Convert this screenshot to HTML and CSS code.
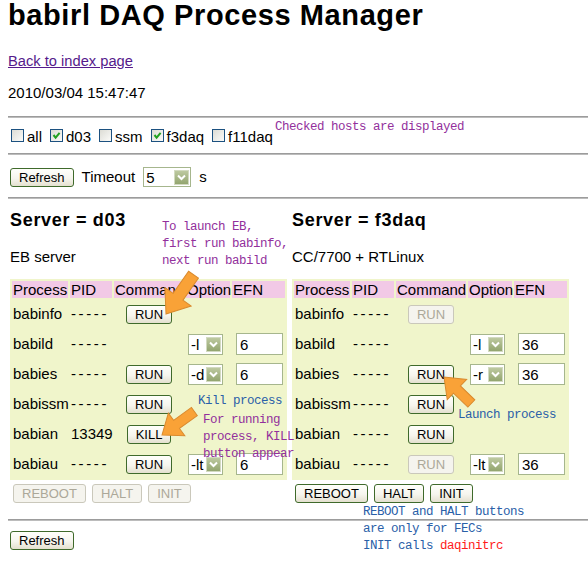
FILE: index.html
```html
<!DOCTYPE html>
<html>
<head>
<meta charset="utf-8">
<title>babirl DAQ Process Manager</title>
<link rel="stylesheet" href="styles.css">
</head>
<body>
<h1 class="title">babirl DAQ Process Manager</h1>
<p class="back"><a href="#">Back to index page</a></p>
<p class="date">2010/03/04 15:47:47</p>
<hr class="rule rule-a">
<div class="hosts">
  <label class="host"><span class="cb"></span>all</label>
  <label class="host"><span class="cb"><svg viewBox="0 0 11 11" width="11" height="11"><path d="M2.5 5 L4.6 7.6 L8.6 2.8" fill="none" stroke="#21a121" stroke-width="2"/></svg></span>d03</label>
  <label class="host"><span class="cb"></span>ssm</label>
  <label class="host"><span class="cb"><svg viewBox="0 0 11 11" width="11" height="11"><path d="M2.5 5 L4.6 7.6 L8.6 2.8" fill="none" stroke="#21a121" stroke-width="2"/></svg></span>f3daq</label>
  <label class="host"><span class="cb"></span>f11daq</label>
</div>
<hr class="rule rule-b">
<div class="controls">
  <button class="btn">Refresh</button>
  <span>Timeout</span>
  <span class="sel sel-wide"><select><option>5</option></select><span class="sel-arrow"><svg width="9" height="7" viewBox="0 0 9 7"><path d="M1 1.5 L4.5 5 L8 1.5" fill="none" stroke="#fff" stroke-width="2"/></svg></span></span>
  <span>s</span>
</div>
<hr class="rule rule-c">
<div class="servers">
  <section class="server">
    <h2 class="server-name">Server = d03</h2>
    <p class="desc">EB server</p>
    <table class="procs">
      <colgroup><col class="c-proc"><col class="c-pid"><col class="c-cmd"><col class="c-opt"><col class="c-efn"></colgroup>
      <tr><th>Process</th><th>PID</th><th>Command</th><th>Option</th><th>EFN</th></tr>
      <tr><td>babinfo</td><td class="none">-----</td><td class="cmd"><button class="btn">RUN</button></td><td></td><td></td></tr>
      <tr><td>babild</td><td class="none">-----</td><td class="cmd"></td><td><span class="sel"><select><option>-l</option></select><span class="sel-arrow"><svg width="9" height="7" viewBox="0 0 9 7"><path d="M1 1.5 L4.5 5 L8 1.5" fill="none" stroke="#fff" stroke-width="2"/></svg></span></span></td><td><input class="efn" value="6"></td></tr>
      <tr><td>babies</td><td class="none">-----</td><td class="cmd"><button class="btn">RUN</button></td><td><span class="sel"><select><option>-d</option></select><span class="sel-arrow"><svg width="9" height="7" viewBox="0 0 9 7"><path d="M1 1.5 L4.5 5 L8 1.5" fill="none" stroke="#fff" stroke-width="2"/></svg></span></span></td><td><input class="efn" value="6"></td></tr>
      <tr><td>babissm</td><td class="none">-----</td><td class="cmd"><button class="btn">RUN</button></td><td></td><td></td></tr>
      <tr><td>babian</td><td>13349</td><td class="cmd"><button class="btn">KILL</button></td><td></td><td></td></tr>
      <tr><td>babiau</td><td class="none">-----</td><td class="cmd"><button class="btn">RUN</button></td><td><span class="sel"><select><option>-lt</option></select><span class="sel-arrow"><svg width="9" height="7" viewBox="0 0 9 7"><path d="M1 1.5 L4.5 5 L8 1.5" fill="none" stroke="#fff" stroke-width="2"/></svg></span></span></td><td><input class="efn" value="6"></td></tr>
    </table>
    <div class="actions">
      <button class="btn" disabled>REBOOT</button>
      <button class="btn" disabled>HALT</button>
      <button class="btn" disabled>INIT</button>
    </div>
  </section>
  <section class="server">
    <h2 class="server-name">Server = f3daq</h2>
    <p class="desc">CC/7700 + RTLinux</p>
    <table class="procs">
      <colgroup><col class="c-proc"><col class="c-pid"><col class="c-cmd"><col class="c-opt"><col class="c-efn"></colgroup>
      <tr><th>Process</th><th>PID</th><th>Command</th><th>Option</th><th>EFN</th></tr>
      <tr><td>babinfo</td><td class="none">-----</td><td class="cmd"><button class="btn" disabled>RUN</button></td><td></td><td></td></tr>
      <tr><td>babild</td><td class="none">-----</td><td class="cmd"></td><td><span class="sel"><select><option>-l</option></select><span class="sel-arrow"><svg width="9" height="7" viewBox="0 0 9 7"><path d="M1 1.5 L4.5 5 L8 1.5" fill="none" stroke="#fff" stroke-width="2"/></svg></span></span></td><td><input class="efn" value="36"></td></tr>
      <tr><td>babies</td><td class="none">-----</td><td class="cmd"><button class="btn">RUN</button></td><td><span class="sel"><select><option>-r</option></select><span class="sel-arrow"><svg width="9" height="7" viewBox="0 0 9 7"><path d="M1 1.5 L4.5 5 L8 1.5" fill="none" stroke="#fff" stroke-width="2"/></svg></span></span></td><td><input class="efn" value="36"></td></tr>
      <tr><td>babissm</td><td class="none">-----</td><td class="cmd"><button class="btn">RUN</button></td><td></td><td></td></tr>
      <tr><td>babian</td><td class="none">-----</td><td class="cmd"><button class="btn">RUN</button></td><td></td><td></td></tr>
      <tr><td>babiau</td><td class="none">-----</td><td class="cmd"><button class="btn" disabled>RUN</button></td><td><span class="sel"><select><option>-lt</option></select><span class="sel-arrow"><svg width="9" height="7" viewBox="0 0 9 7"><path d="M1 1.5 L4.5 5 L8 1.5" fill="none" stroke="#fff" stroke-width="2"/></svg></span></span></td><td><input class="efn" value="36"></td></tr>
    </table>
    <div class="actions">
      <button class="btn">REBOOT</button>
      <button class="btn">HALT</button>
      <button class="btn">INIT</button>
    </div>
  </section>
</div>
<hr class="rule rule-d">
<button class="btn btn-bottom">Refresh</button>

<p class="note purple note-hosts">Checked hosts are displayed</p>
<p class="note purple note-launch">To launch EB,
first run babinfo,
next run babild</p>
<p class="note blue note-kill">Kill process</p>
<p class="note purple note-running">For running
process, KILL
button appear</p>
<p class="note blue note-proc">Launch process</p>
<div class="note blue note-reboot"><div>REBOOT and HALT buttons</div><div>are only for FECs</div><div>INIT calls <span class="red">daqinitrc</span></div></div>

<svg class="arrows" width="588" height="574" viewBox="0 0 588 574">
  <polygon transform="translate(166 314) rotate(125)" points="0,0 -21,-16 -21,-6 -48,-6 -48,6 -21,6 -21,16"/>
  <polygon transform="translate(162 435) rotate(144)" points="0,0 -18,-14 -18,-5 -40,-5 -40,5 -18,5 -18,14"/>
  <polygon transform="translate(444 377) rotate(224)" points="0,0 -18,-14 -18,-5 -38,-5 -38,5 -18,5 -18,14"/>
</svg>
</body>
</html>
```
FILE: styles.css
```css
* { box-sizing: border-box; }
html { background: #fff; }
body {
  margin: 0 0 0 8px;
  font-family: "Liberation Sans", Arial, sans-serif;
  font-size: 15px;
  line-height: 18px;
  color: #000;
  overflow: hidden;
}
.title {
  margin: 0;
  font-size: 29px;
  line-height: 30px;
  font-weight: bold;
  letter-spacing: 0.6px;
}
.back { margin: 22px 0 0; font-size: 14.7px; }
.back a { color: #551a8b; }
.date { margin: 14px 0 0; }
.rule {
  height: 0;
  margin: 0;
  border: 0;
  border-top: 1px solid #9c9c9c;
  border-bottom: 1px solid #bcbcbc;
}
.rule-a { margin-top: 14px; }
.rule-b { margin-top: 7px; }
.rule-c { margin-top: 10px; }
.rule-d { margin-top: 16px; }

.hosts { margin-top: 10px; display: flex; align-items: baseline; }
.host { display: block; margin-right: 5px; }
.cb {
  display: inline-block;
  vertical-align: baseline;
  width: 13px;
  height: 13px;
  margin: 0 3px;
  border: 1px solid #1c5180;
  background: linear-gradient(135deg, #dcdcd5, #fbfbf9);
}
.cb svg { display: block; }

.controls {
  margin-top: 12px;
  height: 20px;
  display: flex;
  align-items: center;
  gap: 8px;
  padding-left: 2px;
}

.btn {
  font-family: "Liberation Sans", Arial, sans-serif;
  font-size: 13px;
  height: 19px;
  line-height: 17px;
  padding: 0 8px;
  margin: 0;
  border: 1px solid #3f6a2b;
  border-radius: 3px;
  background: linear-gradient(#fffffb, #f6f5ee 55%, #e4e0cf);
  color: #000;
}
.btn:disabled {
  border-color: #cac8bb;
  color: #aca899;
  background: #f5f4ee;
}
.btn-bottom { display: block; margin: 10px 0 0 2px; }

.sel {
  display: inline-flex;
  align-items: center;
  vertical-align: middle;
  width: 35px;
  height: 21px;
  margin-left: 1px;
  padding: 1px;
  border: 1px solid #a6b68d;
  background: #fff;
}
.sel-wide { width: 48px; height: 20px; margin-left: 0; }
.sel select {
  -webkit-appearance: none;
  appearance: none;
  flex: 1;
  min-width: 0;
  height: 100%;
  margin: 0;
  padding: 0 0 0 1px;
  border: 0;
  background: transparent;
  font: inherit;
  font-size: 15px;
  color: #000;
  outline: none;
}
.sel-arrow {
  flex: none;
  width: 15px;
  height: 15px;
  display: flex;
  align-items: center;
  justify-content: center;
  border: 1px solid #d2dac0;
  background: linear-gradient(#bdc9a0, #93a56f);
}
.sel-arrow svg { display: block; }

.efn {
  width: 47px;
  height: 22px;
  margin: 0 0 0 3px;
  padding: 0 3px;
  border: 1px solid #a6b68d;
  font: inherit;
  font-size: 15px;
  color: #000;
  vertical-align: middle;
}

.servers {
  display: grid;
  grid-template-columns: 277px 277px;
  column-gap: 5px;
  padding-left: 2px;
}
.server-name {
  margin: 10px 0 0;
  font-size: 18px;
  line-height: 22px;
  letter-spacing: 0.7px;
}
.desc { margin: 17px 0 0; }

.procs {
  margin-top: 13px;
  width: 277px;
  table-layout: fixed;
  border-collapse: separate;
  border-spacing: 2px;
  background: #f0f5cb;
}
.c-proc { width: 56px; }
.c-pid { width: 42px; }
.c-cmd { width: 70px; }
.c-opt { width: 44px; }
.c-efn { width: 53px; }
.procs th {
  height: 17px;
  padding: 0 1px;
  line-height: 17px;
  background: #f2c9e6;
  font-weight: normal;
  text-align: left;
  white-space: nowrap;
}
.procs td {
  height: 28px;
  padding: 0 1px;
  white-space: nowrap;
  vertical-align: middle;
}
.procs td.none { letter-spacing: 2.6px; }
.procs td.cmd { text-align: center; }

.actions {
  margin-top: 4px;
  display: flex;
  gap: 6px;
  padding-left: 3px;
}

.note {
  position: absolute;
  margin: 0;
  font-family: "Liberation Mono", "DejaVu Sans Mono", monospace;
  font-size: 12.5px;
  letter-spacing: -0.5px;
  line-height: 17px;
  white-space: pre;
}
.purple { color: #92309c; }
.blue { color: #2a60a8; }
.red { color: #ff1a1a; }
.note-hosts { left: 275px; top: 119px; }
.note-launch { left: 162px; top: 219px; }
.note-kill { left: 198px; top: 393px; }
.note-running { left: 203px; top: 412px; }
.note-proc { left: 458px; top: 407px; }
.note-reboot { left: 363px; top: 504px; }

.arrows {
  position: absolute;
  left: 0;
  top: 0;
  pointer-events: none;
}
.arrows polygon {
  fill: #f9a237;
  stroke: #d98a2e;
  stroke-width: 1;
}
```
